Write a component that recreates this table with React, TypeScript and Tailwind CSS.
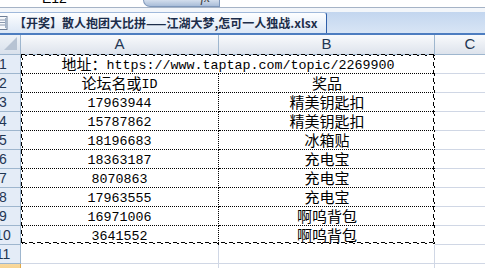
const PRIZES: [string, string][] = [
  ["17963944", "精美钥匙扣"],
  ["15787862", "精美钥匙扣"],
  ["18196683", "冰箱贴"],
  ["18363187", "充电宝"],
  ["8070863", "充电宝"],
  ["17963555", "充电宝"],
  ["16971006", "啊呜背包"],
  ["3641552", "啊呜背包"],
];

const antsX =
  "absolute h-[2px] bg-[image:linear-gradient(90deg,#000_0_4px,transparent_4px_8px),linear-gradient(90deg,transparent_0_4px,#000_4px_6px,transparent_6px_8px)] bg-[length:8px_1px] bg-[position:0_0,0_1px] bg-repeat-x";
const antsY =
  "absolute w-[2px] bg-[image:linear-gradient(180deg,#000_0_4px,transparent_4px_8px),linear-gradient(180deg,transparent_0_4px,#000_4px_6px,transparent_6px_8px)] bg-[length:1px_8px] bg-[position:0_0,1px_0] bg-repeat-y";

export default function App() {
  return (
    <div className="h-[268px] w-[485px] overflow-hidden bg-white font-['Liberation_Sans',sans-serif]">
      <FormulaStrip />
      <div className="h-[4px] bg-[#f3f6fa]" />
      <TabStrip />
      <Sheet />
    </div>
  );
}

function FormulaStrip() {
  return (
    <div className="flex h-[8px] overflow-hidden border-b border-[#a5b3c6] bg-white">
      <div className="-mt-[10px] w-[143px] shrink-0 pl-[42px] text-[14px] leading-[16px] text-black">E12</div>
      <div className="flex h-[7px] w-[77px] shrink-0 justify-end overflow-hidden rounded-bl-[8px] border-x border-b border-[#7f98bb] bg-gradient-to-b from-[#d3deed] to-[#a9bdd8] pr-[9px]">
        <span className="-mt-[9px] font-['Liberation_Serif',serif] text-[13px] italic leading-[14px] text-[#3a3a3a]">fx</span>
      </div>
    </div>
  );
}

function TabStrip() {
  return (
    <div className="flex h-[23px] border-b-2 border-[#4d7dc0] bg-gradient-to-b from-[#c3d6ef] to-[#d8e5f5]">
      <div className="flex w-[327px] shrink-0 items-center gap-[6px] rounded-tr-[3px] border-r border-t border-[#2f5fa9] border-t-[#9fb8da] bg-gradient-to-b from-[#fdfeff] to-[#dce7f5]">
        <svg width="8" height="14" viewBox="0 0 8 14" className="shrink-0">
          <rect x="-4" y="0.5" width="11" height="13" fill="#f7f9fc" stroke="#6f7f96" />
          <path d="M0 4h5M0 6.5h5M0 9h5" stroke="#8a98ad" />
          <rect x="5" y="2" width="1.5" height="10" fill="#9fb0c6" />
        </svg>
        <span className="whitespace-nowrap font-['Noto_Sans_CJK_SC',sans-serif] text-[12px] font-bold leading-none text-[#1c2d4a]">
          【开奖】散人抱团大比拼——江湖大梦,怎可一人独战.xlsx
        </span>
      </div>
    </div>
  );
}

function Sheet() {
  return (
    <div className="relative">
      <div className="flex h-[20px] border-b border-[#9eb6ce] bg-gradient-to-b from-[#f9fafc] to-[#dde3ec] text-[15px] text-[#1f3653]">
        <div className="w-[21px] shrink-0 border-r border-[#9eb6ce] bg-gradient-to-b from-[#eef2f7] to-[#d9e1ec]">
          <svg width="20" height="19" viewBox="0 0 20 19">
            <polygon points="17,2 17,15 4,15" fill="#b7c3d3" />
          </svg>
        </div>
        <div className="flex w-[198px] shrink-0 items-center justify-center border-r border-[#9eb6ce]">A</div>
        <div className="flex w-[216px] shrink-0 items-center justify-center border-r border-[#9eb6ce]">B</div>
        <div className="flex w-[70px] shrink-0 items-center justify-center">C</div>
      </div>

      <Row n={1}>
        <div className="flex w-[414px] shrink-0 items-center justify-center border-b border-dotted border-black">
          <span className="font-['Noto_Sans_CJK_SC',sans-serif] text-[15px]">地址：</span>
          <span className="pt-[3px] font-['Liberation_Mono',monospace] text-[13.33px]">https://www.taptap.com/topic/2269900</span>
        </div>
      </Row>
      <Row n={2}>
        <div className="flex w-[198px] shrink-0 items-center justify-center border-b border-r border-dotted border-black">
          <span className="font-['Noto_Sans_CJK_SC',sans-serif] text-[15px]">论坛名或</span>
          <span className="pt-[3px] font-['Liberation_Mono',monospace] text-[13.33px]">ID</span>
        </div>
        <div className="flex w-[216px] shrink-0 items-center justify-center border-b border-dotted border-black font-['Noto_Sans_CJK_SC',sans-serif] text-[15px]">
          奖品
        </div>
      </Row>
      {PRIZES.map(([id, prize], i) => {
        const last = i === PRIZES.length - 1;
        return (
          <Row key={id} n={i + 3}>
            <div
              className={
                last
                  ? "flex w-[198px] shrink-0 items-center justify-center border-r border-dotted border-black pt-[3px] font-['Liberation_Mono',monospace] text-[13.33px]"
                  : "flex w-[198px] shrink-0 items-center justify-center border-b border-r border-dotted border-black pt-[3px] font-['Liberation_Mono',monospace] text-[13.33px]"
              }
            >
              {id}
            </div>
            <div
              className={
                last
                  ? "flex w-[216px] shrink-0 items-center justify-center font-['Noto_Sans_CJK_SC',sans-serif] text-[15px]"
                  : "flex w-[216px] shrink-0 items-center justify-center border-b border-dotted border-black font-['Noto_Sans_CJK_SC',sans-serif] text-[15px]"
              }
            >
              {prize}
            </div>
          </Row>
        );
      })}
      <Row n={11}>
        <div className="w-[198px] shrink-0 border-b border-r border-[#d0d7e5]" />
        <div className="w-[216px] shrink-0 border-b border-r border-[#d0d7e5]" />
      </Row>
      <Row n={12} active>
        <div className="w-[198px] shrink-0 border-b border-r border-[#d0d7e5]" />
        <div className="w-[216px] shrink-0 border-b border-r border-[#d0d7e5]" />
      </Row>

      {/* copy marquee round A1:B10 */}
      <div className="pointer-events-none absolute left-[21px] top-[19px] h-[190px] w-[414px]">
        <div className={`${antsX} left-0 right-0 top-0`} />
        <div className={`${antsX} bottom-0 left-0 right-0`} />
        <div className={`${antsY} bottom-0 left-0 top-0`} />
        <div className={`${antsY} bottom-0 right-0 top-0`} />
      </div>
    </div>
  );
}

function Row({ n, active, children }: { n: number; active?: boolean; children: React.ReactNode }) {
  return (
    <div className="flex h-[19px] text-black">
      <div
        className={
          active
            ? "w-[21px] shrink-0 overflow-hidden border-b border-r border-[#e0a94a] bg-gradient-to-b from-[#f9d99f] to-[#f1c15f]"
            : "w-[21px] shrink-0 overflow-hidden border-b border-r border-[#9eb6ce] bg-[#e4ecf7]"
        }
      >
        <div className="-ml-[12px] flex h-full w-[30px] items-center justify-center text-[14px] text-[#1f3653]">{n}</div>
      </div>
      {children}
      <div className="w-[70px] shrink-0 border-b border-r border-[#d0d7e5]" />
    </div>
  );
}
